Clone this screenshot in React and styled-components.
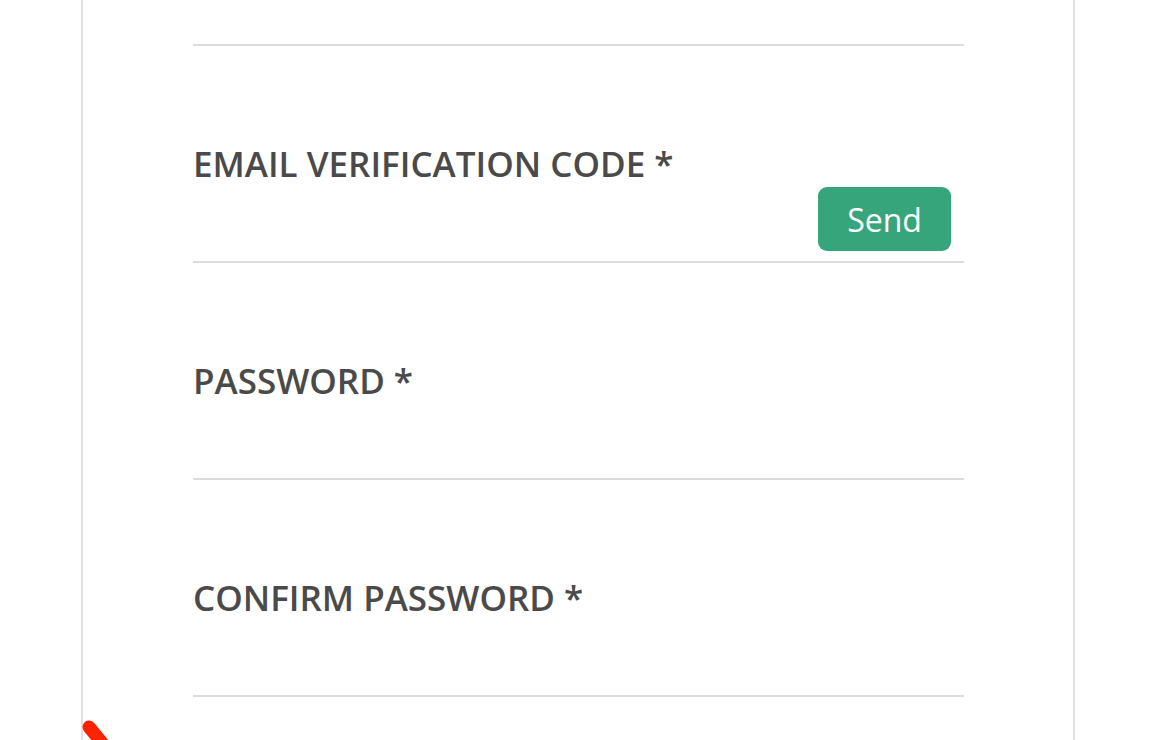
import styled, { createGlobalStyle } from 'styled-components'

const Global = createGlobalStyle`
    html, body {
        margin: 0;
        padding: 0;
        background: #fff;
        overflow: hidden;
    }
    body {
        font-family: "Open Sans", "Noto Sans", sans-serif;
    }
`;

const Page = styled.div`
    position: relative;
    width: 1160px;
    height: 740px;
    overflow: hidden;
    background: #fff;
`;

const Panel = styled.div`
    box-sizing: border-box;
    margin-left: 81px;
    width: 994px;
    height: 740px;
    border-left: 2px solid #e2e2e2;
    border-right: 2px solid #e2e2e2;
    padding: 0 109px 0 110px;
    overflow: hidden;
`;

const Form = styled.form`
    display: flex;
    flex-direction: column;
`;

const TopRule = styled.div`
    height: 44px;
    border-bottom: 2px solid #dcdcdc;
`;

const Field = styled.div`
    display: flex;
    flex-direction: column;
    height: 217px;
    box-sizing: border-box;
    border-bottom: 2px solid #dcdcdc;
    padding-top: 95px;
`;

const Label = styled.label`
    font-size: 35px;
    line-height: 46px;
    font-weight: 600;
    color: #4a4a4a;
`;

const InputRow = styled.div`
    flex: 1;
    display: flex;
    align-items: flex-end;
    padding: 0 13px 15px 0;
`;

const Input = styled.input`
    flex: 1;
    border: none;
    outline: none;
    background: transparent;
    font-family: inherit;
    font-size: 30px;
    height: 50px;
    padding: 0;
`;

const SendButton = styled.button`
    width: 133px;
    height: 64px;
    border: none;
    border-radius: 9px;
    background: #37a57b;
    color: #fff;
    font-family: "Open Sans", sans-serif;
    font-size: 32px;
    font-weight: 500;
    cursor: pointer;
`;

const Mark = styled.svg`
    position: absolute;
    left: 78px;
    top: 716px;
`;

const fields = [
    { label: 'EMAIL VERIFICATION CODE *', type: 'text', send: true },
    { label: 'PASSWORD *', type: 'password' },
    { label: 'CONFIRM PASSWORD *', type: 'password' },
];

const App = () => (
    <Page>
        <Global />
        <Panel>
            <Form onSubmit={e => e.preventDefault()}>
                <TopRule />
                {fields.map(f => (
                    <Field key={f.label}>
                        <Label>{f.label}</Label>
                        <InputRow>
                            <Input type={f.type} />
                            {f.send && <SendButton type="button">Send</SendButton>}
                        </InputRow>
                    </Field>
                ))}
            </Form>
        </Panel>
        <Mark width="40" height="30" viewBox="0 0 40 30">
            <path d="M11 11 L30 34" stroke="#ff2200" strokeWidth="13" strokeLinecap="round" fill="none" />
        </Mark>
    </Page>
);

export default App;
